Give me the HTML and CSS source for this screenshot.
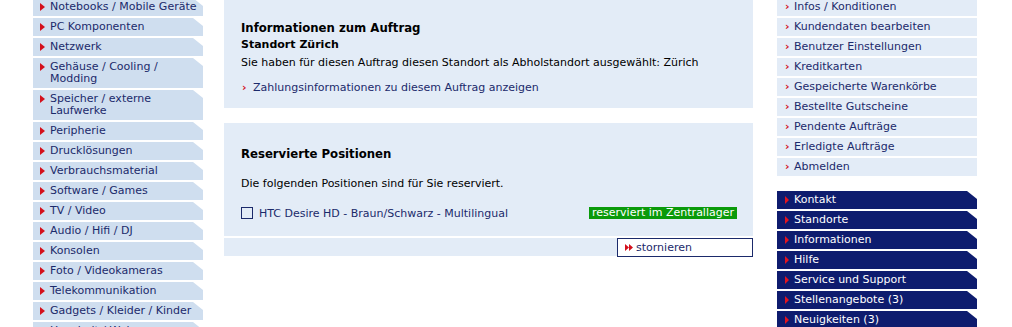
FILE: index.html
```html
<!DOCTYPE html>
<html lang="de">

    <head>
        <meta charset="UTF-8">
        <title>Auftrag</title>
        <link rel="stylesheet" href="styles.css">
    </head>

    <body>
        <div class="page">
            <ul class="catnav">
                <li><a href="#">Notebooks / Mobile Geräte</a></li>
                <li><a href="#">PC Komponenten</a></li>
                <li><a href="#">Netzwerk</a></li>
                <li><a href="#">Gehäuse / Cooling / Modding</a></li>
                <li><a href="#">Speicher / externe Laufwerke</a></li>
                <li><a href="#">Peripherie</a></li>
                <li><a href="#">Drucklösungen</a></li>
                <li><a href="#">Verbrauchsmaterial</a></li>
                <li><a href="#">Software / Games</a></li>
                <li><a href="#">TV / Video</a></li>
                <li><a href="#">Audio / Hifi / DJ</a></li>
                <li><a href="#">Konsolen</a></li>
                <li><a href="#">Foto / Videokameras</a></li>
                <li><a href="#">Telekommunikation</a></li>
                <li><a href="#">Gadgets / Kleider / Kinder</a></li>
                <li><a href="#">Haushalt / Wohnen</a></li>
            </ul>

            <div class="main">
                <div class="box">
                    <h2>Informationen zum Auftrag</h2>
                    <p class="sub">Standort Zürich</p>
                    <p>Sie haben für diesen Auftrag diesen Standort als Abholstandort ausgewählt: Zürich</p>
                    <a class="more" href="#">Zahlungsinformationen zu diesem Auftrag anzeigen</a>
                </div>

                <div class="box reserved">
                    <h2>Reservierte Positionen</h2>
                    <p>Die folgenden Positionen sind für Sie reserviert.</p>
                    <div class="item">
                        <span class="check"></span>
                        <a href="#">HTC Desire HD - Braun/Schwarz - Multilingual</a>
                        <span class="status">reserviert im Zentrallager</span>
                    </div>
                </div>
                <div class="actions">
                    <a class="cancel" href="#">stornieren</a>
                </div>
            </div>

            <div class="side">
                <ul class="account">
                    <li><a href="#">Infos / Konditionen</a></li>
                    <li><a href="#">Kundendaten bearbeiten</a></li>
                    <li><a href="#">Benutzer Einstellungen</a></li>
                    <li><a href="#">Kreditkarten</a></li>
                    <li><a href="#">Gespeicherte Warenkörbe</a></li>
                    <li><a href="#">Bestellte Gutscheine</a></li>
                    <li><a href="#">Pendente Aufträge</a></li>
                    <li><a href="#">Erledigte Aufträge</a></li>
                    <li><a href="#">Abmelden</a></li>
                </ul>
                <ul class="infonav">
                    <li><a href="#">Kontakt</a></li>
                    <li><a href="#">Standorte</a></li>
                    <li><a href="#">Informationen</a></li>
                    <li><a href="#">Hilfe</a></li>
                    <li><a href="#">Service und Support</a></li>
                    <li><a href="#">Stellenangebote (3)</a></li>
                    <li><a href="#">Neuigkeiten (3)</a></li>
                </ul>
            </div>
        </div>
    </body>

</html>
```

FILE: styles.css
```css
body {
    margin: 0;
    font-family: "DejaVu Sans", Verdana, sans-serif;
    font-size: 11px;
    color: #000;
    background: #fff;
    overflow: hidden;
}

a {
    color: #1b2a6b;
    text-decoration: none;
}

ul {
    list-style: none;
    margin: 0;
    padding: 0;
}

.page {
    display: flex;
    align-items: flex-start;
    margin-top: -2px;
    padding-left: 33px;
}

/* left category navigation */
.catnav {
    width: 170px;
    display: flex;
    flex-direction: column;
    gap: 2px;
}

.catnav li {
    background: #cfdeef;
    clip-path: polygon(0 0, calc(100% - 10px) 0, 100% 8px, 100% 100%, 0 100%);
}

.catnav a {
    display: flex;
    padding: 3px 4px 3px 17px;
    line-height: 12px;
    position: relative;
}

.catnav a::before {
    content: "";
    position: absolute;
    left: 7px;
    top: 5px;
    border-left: 5px solid #d4101c;
    border-top: 4px solid transparent;
    border-bottom: 4px solid transparent;
}

/* main content */
.main {
    width: 529px;
    margin-left: 21px;
    display: flex;
    flex-direction: column;
}

.box {
    background: #e3ecf7;
    padding: 22px 17px 14px;
}

.box h2 {
    font-family: "DejaVu Sans Condensed", "DejaVu Sans", sans-serif;
    font-size: 13px;
    font-weight: bold;
    margin: 0 0 3px;
    line-height: 16px;
}

.box p {
    margin: 0 0 6px;
    line-height: 12px;
}

.box .sub {
    font-weight: bold;
}

.more {
    display: block;
    margin-top: 13px;
    padding-left: 12px;
    line-height: 12px;
    position: relative;
}

.more::before {
    content: "\203A";
    position: absolute;
    left: 1px;
    color: #d4101c;
    font-weight: bold;
}

.reserved {
    margin-top: 15px;
    padding: 23px 16px 17px 17px;
}

.reserved h2 {
    margin-bottom: 16px;
}

.reserved p {
    margin-bottom: 17px;
}

.item {
    display: flex;
    align-items: center;
    height: 12px;
}

.check {
    width: 10px;
    height: 10px;
    border: 1px solid #1b2a6b;
    margin-right: 6px;
}

.status {
    margin-left: auto;
    background: #0a9a0a;
    color: #fff;
    padding: 0 3px;
    line-height: 12px;
}

.actions {
    margin-top: 2px;
    height: 18px;
    background: #e3ecf7;
    display: flex;
    justify-content: flex-end;
}

.cancel {
    width: 116px;
    height: 17px;
    border: 1px solid #1b2a6b;
    background: #fff;
    padding-left: 18px;
    line-height: 17px;
    position: relative;
}

.cancel::before {
    content: "";
    position: absolute;
    left: 7px;
    top: 5px;
    width: 8px;
    height: 7px;
    background: #d4101c;
    clip-path: polygon(0 0, 50% 50%, 50% 0, 100% 50%, 50% 100%, 50% 50%, 0 100%);
}

/* right column */
.side {
    width: 200px;
    margin-left: 24px;
    display: flex;
    flex-direction: column;
}

.account,
.infonav {
    display: flex;
    flex-direction: column;
    gap: 2px;
}

.account li {
    background: #e3ecf7;
}

.account a,
.infonav a {
    display: block;
    padding: 3px 4px 3px 17px;
    line-height: 12px;
    position: relative;
}

.account a::before {
    content: "\203A";
    position: absolute;
    left: 8px;
    color: #d4101c;
    font-weight: bold;
}

.infonav {
    margin-top: 15px;
}

.infonav li {
    background: #0e1c6e;
    clip-path: polygon(0 0, calc(100% - 10px) 0, 100% 8px, 100% 100%, 0 100%);
}

.infonav a {
    color: #fff;
}

.infonav a::before {
    content: "";
    position: absolute;
    left: 8px;
    top: 5px;
    border-left: 4px solid #e4141f;
    border-top: 4px solid transparent;
    border-bottom: 4px solid transparent;
}
```
